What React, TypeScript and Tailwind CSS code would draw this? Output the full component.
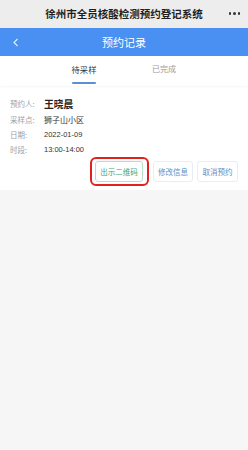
import React from "react";

export default function App() {
  const font = { fontFamily: '"Noto Sans CJK SC", "Noto Sans", "Liberation Sans", sans-serif' };
  return (
    <div className="w-[248px] h-[450px] bg-[#f6f6f6] overflow-hidden" style={font}>
      <div className="relative h-[28px] bg-[#ededed] flex items-center justify-center">
        <span className="text-[10.5px] font-semibold text-[#1e1e1e] leading-none">徐州市全员核酸检测预约登记系统</span>
        <div className="absolute right-[8px] top-[12px] flex gap-[2px]">
          <span className="w-[2.5px] h-[2.5px] rounded-full bg-[#333]"></span>
          <span className="w-[2.5px] h-[2.5px] rounded-full bg-[#333]"></span>
          <span className="w-[2.5px] h-[2.5px] rounded-full bg-[#333]"></span>
        </div>
      </div>
      <div className="relative h-[28px] bg-[#4a8ff2] flex items-center justify-center">
        <svg className="absolute left-[12px] top-[10px]" width="8" height="9" viewBox="0 0 8 9">
          <polyline points="5.5,1 2,4.5 5.5,8" fill="none" stroke="#dfeafc" strokeWidth="1.2" />
        </svg>
        <span className="text-[11px] text-white leading-none">预约记录</span>
      </div>
      <div className="h-[30px] bg-white flex justify-center shadow-[0_1px_2px_rgba(0,0,0,0.04)] relative">
        <div className="w-[80px] flex flex-col items-center">
          <span className="mt-[9px] text-[8.3px] text-[#333] leading-none">待采样</span>
          <span className="mt-[9px] w-[24px] h-[1.5px] bg-[#5b8fd6] rounded"></span>
        </div>
        <div className="w-[80px] flex flex-col items-center">
          <span className="mt-[9px] text-[8px] text-[#9a9a9a] leading-none">已完成</span>
        </div>
      </div>
      <div className="bg-white pt-[10px] pb-[8px]">
        <div className="flex items-center h-[16px] pl-[10px]">
          <span className="w-[34px] text-[7.5px] text-[#a0a0a0]">预约人:</span>
          <span className="text-[9.8px] font-bold text-[#222]">王晓晨</span>
        </div>
        <div className="flex items-center h-[15px] pl-[10px]">
          <span className="w-[34px] text-[7.5px] text-[#a0a0a0]">采样点:</span>
          <span className="text-[8px] text-[#333]">狮子山小区</span>
        </div>
        <div className="flex items-center h-[15px] pl-[10px]">
          <span className="w-[34px] text-[7.5px] text-[#a0a0a0]">日期:</span>
          <span className="text-[7.5px] text-[#333]" style={{ fontFamily: '"Liberation Sans", sans-serif' }}>2022-01-09</span>
        </div>
        <div className="flex items-center h-[15px] pl-[10px]">
          <span className="w-[34px] text-[7.5px] text-[#a0a0a0]">时段:</span>
          <span className="text-[7.5px] text-[#333]" style={{ fontFamily: '"Liberation Sans", sans-serif' }}>13:00-14:00</span>
        </div>
        <div className="flex justify-end pr-[10px] mt-[4px]">
          <div className="relative mr-[10px]">
            <div className="w-[48px] h-[21px] border border-[#b9dfc9] rounded-[3px] flex items-center justify-center text-[7.5px] text-[#3fa46e]">出示二维码</div>
            <div className="absolute -left-[5px] -right-[6px] -top-[4px] -bottom-[4px] border-2 border-[#e0211d] rounded-[6px]"></div>
          </div>
          <div className="w-[40px] h-[21px] border border-[#e7eef5] rounded-[3px] flex items-center justify-center text-[7.5px] text-[#5a90c9] mr-[4px]">修改信息</div>
          <div className="w-[41px] h-[21px] border border-[#e7eef5] rounded-[3px] flex items-center justify-center text-[7.5px] text-[#5a90c9]">取消预约</div>
        </div>
      </div>
    </div>
  );
}
